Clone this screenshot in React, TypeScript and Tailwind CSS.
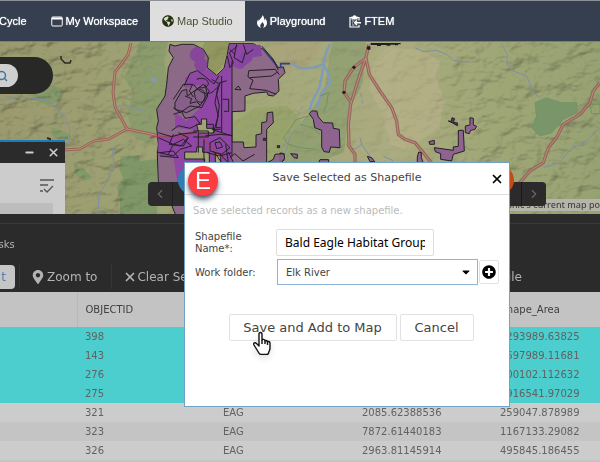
import { useState } from "react";
import type { ReactNode } from "react";
import { ChevronLeft, ChevronRight, Minus, Search, X } from "lucide-react";
import { FaCaretDown, FaGlobeAmericas, FaMapMarkerAlt, FaPlusCircle } from "react-icons/fa";

const columns = ["", "OBJECTID", "SPECIES", "Shape_Leng", "Shape_Area"];

const records = [
    { id: "398", species: "EAG", length: "4120.88214307", area: "1293989.63825", selected: true },
    { id: "143", species: "EAG", length: "3207.11950426", area: "1697989.11681", selected: true },
    { id: "276", species: "EAG", length: "1894.50278116", area: "200102.112632", selected: true },
    { id: "275", species: "EAG", length: "6633.40915527", area: "2916541.97029", selected: true },
    { id: "321", species: "EAG", length: "2085.62388536", area: "259047.878989", selected: false },
    { id: "323", species: "EAG", length: "7872.61440183", area: "1167133.29082", selected: false },
    { id: "326", species: "EAG", length: "2963.81145914", area: "495845.186455", selected: false },
];

// road casing and centre line share the same geometry
const westRoads = "M131 42l-3 12-13 17-2 20 2 15 12 22-9 5-9 5-15 2-14 8-17 1M127 128l14 3 10 2 8 2";
const eastRoads =
    "M266 10L258 50 240 100 212 190 205 250 207 315 225 340V366M258 52L222 78 195 120 192 155 212 182M258 52L268 100 300 150 335 200 350 240 355 280 375 295 405 305 430 335 455 366M960 125L940 150 930 185 900 220 850 250 830 290 805 320 790 365 750 390 715 430";

function WindowIcon() {
    return (
        <svg viewBox="0 0 24 22" className="h-[11px] w-3" fill="none" stroke="currentColor" strokeWidth="2">
            <rect x="1.5" y="2" width="21" height="18" rx="2" />
            <path d="M2 5h20" strokeWidth="4" />
        </svg>
    );
}

function FlameIcon() {
    return (
        <svg viewBox="0 0 20 26" className="h-[13px] w-[10px]" fill="currentColor">
            <path d="M10.5 0c1 5-6 8-7 13C3 12 2.600 10 3 8.500 1 10.500 0 13.500 0 16c0 5 3.500 9 9 10-3-2-3.500-5-1.500-7.500 1-1.500 2.500-2.500 2.500-4.500 3 2 4.500 4.500 4 7-.2 2-1 3.500-2 4.600 5-1 8-5 8-9.600 0-4-2-7-4-9.500 0 2-.5 3.500-1.800 4.500C15 7 14 3 10.500 0z" />
        </svg>
    );
}

function ClipboardIcon() {
    return (
        <svg viewBox="0 0 24 26" className="h-[13px] w-3" fill="none" stroke="currentColor" strokeWidth="2.400">
            <path d="M20 11V5H2v19h18v-4" />
            <path d="M6 4h2.500a2.500 2.500 0 0 1 5 0H16v4H6z" fill="currentColor" />
            <path d="M24 15.500H12m4-4.500-4.500 4.500L16 20" strokeWidth="3" />
            <path d="M6 12h5M6 16h2M6 20h5" strokeWidth="1.500" />
        </svg>
    );
}

function NavItem({ icon, active, children }: { icon?: ReactNode; active?: boolean; children: ReactNode }) {
    const tone = active ? "bg-[#dedede] text-[#4a5233]" : "text-white [text-shadow:0_0_1px_#ffffff]";
    return (
        <a href="#" className={`flex h-full shrink-0 items-center gap-[3px] px-3 ${tone}`}>
            {icon}
            <span>{children}</span>
        </a>
    );
}

function MapCanvas() {
    return (
        <svg viewBox="0 41 600 173" preserveAspectRatio="xMinYMin slice" className="h-full w-full">
            <defs>
                <filter id="relief" x="0" y="0" width="100%" height="100%">
                    <feTurbulence type="fractalNoise" baseFrequency="0.05 0.08" numOctaves="3" seed="4" />
                    <feColorMatrix values="0 0 0 0 0  0 0 0 0 0  0 0 0 0 0  1 0 0 0 0" />
                    <feDiffuseLighting surfaceScale="6" diffuseConstant="1.150" lightingColor="#ffffff">
                        <feDistantLight azimuth="225" elevation="60" />
                    </feDiffuseLighting>
                </filter>
                <linearGradient id="land">
                    <stop offset="0" stopColor="#9a9a6e" />
                    <stop offset="0.35" stopColor="#a0a676" />
                    <stop offset="0.65" stopColor="#abac80" />
                    <stop offset="0.78" stopColor="#a2a878" />
                    <stop offset="1" stopColor="#97a272" />
                </linearGradient>
                <linearGradient id="flat">
                    <stop offset="0" stopColor="#ffffff" />
                    <stop offset="0.2" stopColor="#eeeeee" />
                    <stop offset="0.26" stopColor="#555555" />
                    <stop offset="0.7" stopColor="#444444" />
                    <stop offset="0.8" stopColor="#dddddd" />
                </linearGradient>
                <mask id="hills">
                    <rect y="41" width="600" height="173" fill="url(#flat)" />
                </mask>
            </defs>
            <rect y="41" width="600" height="173" fill="url(#land)" />

            {/* forests and open ground */}
            <g fill="#809868">
                <path d="M140 41h28l-4 20 6 30-12 28-5 24-18-5-8-25 6-22-9-14 8-17z" opacity=".6" />
                <path d="M121 155l18-1 1 6 17-2v56h-37v-16l-3-12 6-9-4-10z" />
                <path d="M34 90l14-7 14 4-1 12-14 5-12-5zM74 163l10 5 8 9-8 3-9-7zM51 126l12 4 9 5-8 5-11-4z" opacity=".8" />
                <path d="M332 41h34l-3 40-14 28-5 42-34 14-28 2 10-30 18-26 14-20z" opacity=".5" />
            </g>
            <path d="M372 62l15-15 34 2 20 12-6 14 10 24-6 28-32 22-16-5-10-35-12-20z" fill="#b5b088" opacity=".75" />
            <path d="M233 122l22-15 32-2 14 14-14 34-18 8-10-15-26-2z" fill="#99a46c" />
            <path d="M205 41h25l-6 22-8 10-12-6-5-15z" fill="#92985f" />
            <path d="M272 41h50l-9 20-32 14-14-12z" fill="#aaa47b" />
            <g mask="url(#hills)" className="mix-blend-multiply">
                <rect y="41" width="600" height="173" filter="url(#relief)" opacity=".55" />
            </g>

            {/* rivers */}
            <g fill="none" stroke="#7d8fa6" strokeWidth="1">
                <path d="M0 99l22-3 20 2 12 5 12 15 4 10-2 14M112 147l2 16-7 18-8 13-1 18 3 8M114 106l12-2 18 6" />
                <path d="M357 51l5 22-3 11 4 20M303 105l-14 25-7 22" strokeWidth=".8" strokeDasharray="4 3" />
            </g>
            <path d="M151 76l6 2-2 4-4-2z" fill="#7f9bbb" />

            {/* highways */}
            <path d={westRoads} fill="none" stroke="#9a6558" strokeWidth="3" strokeLinejoin="round" />
            <path d={westRoads} fill="none" stroke="#bd8c79" strokeWidth="1" strokeLinejoin="round" />

            <g transform="translate(280 40) scale(.3333)">
                <g fill="none" stroke="#7f9bbb">
                    <path d="M35 68L60 82 100 80 130 70 145 95 150 125 125 155 110 200M130 68L138 35 150 10M130 80L118 140 95 185 88 210" strokeWidth="7" />
                    <path d="M100 210L60 250 30 290 15 340M405 20L430 32 470 28 500 40 520 58 570 64M665 10L682 40 680 70 700 90 740 105 760 155 780 170M960 260L920 300 870 325 840 365 790 380M200 312L225 325 245 310 270 345M245 310L240 290M310 345L340 360" stroke="#7d8fa6" strokeWidth="3" />
                </g>
                <path d="M765 185L800 170 840 185 890 185 890 215 850 235 815 275 780 285 755 260 770 225z" fill="#79966a" stroke="#6b9060" strokeWidth="2" />
                <path d="M120 165L145 155 140 190 130 215M85 225L50 235 10 290 25 310 60 320 110 325M60 250L95 260 120 280M930 190h30v28h-25z" fill="none" stroke="#6d9460" strokeWidth="3" />
                <path d={eastRoads} fill="none" stroke="#96665a" strokeWidth="10" strokeLinejoin="round" />
                <path d={eastRoads} fill="none" stroke="#bb9080" strokeWidth="3" strokeLinejoin="round" />
                <g fill="#20201c">
                    <circle cx="266" cy="21" r="6" />
                    <circle cx="222" cy="79" r="5" />
                    <circle cx="192" cy="154" r="5" />
                    <path d="M272 6h90v4h-8v3h-9v-2h-14v3h-11v-2h-17v3h-12v-3h-19z" />
                </g>
                <g fill="#8e6390" stroke="#242027" strokeWidth="3" strokeLinejoin="round">
                    <path d="M88 218L95 210 110 210 115 228 130 245 158 246 160 262 178 265 180 320 152 318 148 334 132 332 125 318 125 268 104 260 100 235z" />
                    <path d="M463 320L520 328 520 318 535 316 535 268 550 268 553 330 520 340 515 360 482 355 482 338 466 332z" />
                    <path d="M556 255L570 252 570 230 580 232 580 252 590 256 585 265 572 268 568 278 556 275zM447 302L463 298 463 310 449 310zM412 366L412 348 416 333 424 335 424 350 430 366zM262 346L275 350 284 362 270 362zM116 366L120 356 146 356 146 366zM32 338L52 340 52 352 42 350zM0 336L12 338 12 358 0 362z" />
                    <path d="M505 240L514 241 516 230 524 233 520 244 533 246 532 254 522 248z" fill="#57405c" />
                </g>
            </g>

            {/* habitat layer */}
            <g transform="translate(150 40) scale(.3333)" stroke="#242027" strokeWidth="3" strokeLinejoin="round">
                <path d="M60 10L75 15 95 10 130 10 160 25 175 50 172 80 200 103 222 82 232 40 238 8 310 8 340 25 375 65 382 80 400 78 405 95 385 115 387 150 370 165 355 163 350 153 310 157 285 165 285 210 246 212 246 303 280 303 282 320 318 318 318 282 335 278 335 245 350 242 352 215 368 213 370 245 350 265 350 366 370 355 375 340 402 338 404 352 385 378 105 378 105 530 80 530 60 480 25 425 22 340 25 310 22 280 20 260 25 240 20 205 45 165 50 130 55 80 70 50 57 30z" fill="#8a628a" fillOpacity=".88" />
                <path d="M105 110L130 95 175 85 200 105 225 80 240 10 290 10 315 30 305 60 270 85 245 75 245 366 105 366 105 470 85 440 70 350 25 345 25 290 140 268 75 260 75 215 110 240 150 200 178 150 165 130 105 140z" fill="#8f43a6" fillOpacity=".92" stroke="none" />
                <path d="M290 10L332 12 336 45 310 48 275 85 262 60z" fill="#8545a0" stroke="none" />
                <circle cx="142" cy="41" r="22" fill="#86479a" stroke="#7b3f90" strokeWidth="1" />
                <circle cx="153" cy="72" r="19" fill="#86479a" stroke="#7b3f90" strokeWidth="1" />
                <path d="M75 185L95 150 110 145 112 165 160 130 178 150 150 195 110 215 75 205z" fill="#87608a" />
                <path d="M104 333h36v-15h18v16h20v32h-14v-12h-60zM140 250h14v-16h16v28h22v14h-46zM196 338h16v28h-16z" fill="#a2a474" />
                <path d="M246 60L246 345M185 265L246 285" fill="none" />
                <path d="M340 25L385 80M392 82v-14h28" fill="none" stroke="#34408a" strokeWidth="5" />
                <path d="M0 290L25 285 90 290 140 272 165 300 190 325 225 355" fill="none" stroke="#a24468" strokeWidth="5" />
                <g fill="none" transform="translate(-60 -15)">
                    <path d="M162 150l18-38 22-8 20 15 30 25 15-25M200 130c35-15 55 30 5 25M190 145c35 45 60 25 70 10M170 155M195 180c-10-25 30-30 30 0s-30 20-30 0M165 180l20 8-5 14 20-5 10 10M130 190l30-45h28l-10 20 12 18M225 145l8 35-18 35-35-5-30 20-20-15M265 145l-10 55 10 40-15 50M275 120v170M270 140l-10 35 8 35-10 65h14M278 190h18v36h-14M245 130l20 12 25-8M292 60l8 35 10-15-12-30 24-20M320 25l-8 40 25 15 10-35M340 25l10 30 20-15M300 40l15 15M356 105l-2 18 15 10-10 25 50 5 30 12M356 104l80-4 12 16M360 125l65-5 18-12M395 30l35 40 15 32M325 150l-10 10 18 2z" />
                    <path d="M130 235l25-8 10 20 30-5 15 20-30 15-35-8-20 15M85 290l40 12 30-8 45-5M85 305l45 20 30-15 25 20-35 10-20 20-50-12M145 290l30 15-15 25-30-5-15 30M90 350l40-5 15 20-55-5M130 295l-12 30 35 5 20-25M225 300l45-5 35 3M240 320l30-15 30 30-25 20-35-10zM255 320l15-2 8 15-18 5zM230 350l40 10 35-10M265 350l30 30-8-55M250 345l25 35M230 265h20v15h22M205 290v60M222 310v65M190 285h45v18h-45" />
                    <path d="M302 365l12-12 25 22 35-20M310 378l-15-30" />
                </g>
                <path d="M340 292h7v6h-7zM382 314h7v6h-7z" fill="#57405c" />
            </g>

            <path d="M61 55v3l4 4h5l1-3" stroke="#2b2b25" strokeWidth="1.500" fill="none" />
            <path d="M47 137l3 1v3h6" stroke="#2b2b25" strokeWidth="2" fill="none" />
        </svg>
    );
}

function MapView() {
    return (
        <main className="relative h-[173px] overflow-hidden border-t border-[#7b7b80]">
            <MapCanvas />
            <div className="absolute left-0 top-[15px] flex h-[37px] w-[53px] items-center rounded-r-full bg-[#282826]">
                <button aria-label="Search" className="flex h-[23px] w-[18px] items-center rounded-r-full bg-[#cfcfcf] text-[#3b76a6]">
                    <Search size={12} strokeWidth={3} className="-ml-1" />
                </button>
            </div>

            <div className="absolute bottom-0 left-0 h-[74px] w-[65px] border-t-2 border-[#1d7ab8] bg-[#cccccc]">
                <div className="flex h-[21px] items-center justify-end gap-3 bg-[#2b2b2b] pr-[5px] text-[#cfcfcf]">
                    <button aria-label="Minimize"><Minus size={11} strokeWidth={4} /></button>
                    <button aria-label="Close panel"><X size={13} strokeWidth={3} /></button>
                </div>
                <button aria-label="Selection list" className="ml-[39px] mt-4 block text-[#555555]">
                    <svg viewBox="0 0 16 14" className="h-[14px] w-4" fill="none" stroke="currentColor" strokeWidth="1.300">
                        <path d="M1 1h14M1 6h8M1 12h3M5 10l3 3 6-6" />
                    </svg>
                </button>
                <div className="mt-[10px] h-[11px] w-[53px] bg-[#bdbdbd]"></div>
            </div>

            <div className="absolute bottom-[3px] right-0 bg-[#b5b5aa] font-['Noto_Sans',sans-serif] text-[9px] font-medium leading-3 text-[#454545]">
                National Geographic's current map po
            </div>
            <div className="absolute left-[148px] top-[140px] flex h-6 w-[398px] justify-between rounded-sm bg-[#2c2a2b] text-[#686868]">
                <button aria-label="Previous" className="flex w-[25px] items-center justify-center border-r border-[#202020]">
                    <ChevronLeft size={14} />
                </button>
                <button aria-label="Next" className="flex w-[25px] items-center justify-center border-l border-[#181818]">
                    <ChevronRight size={14} />
                </button>
            </div>
            <div className="absolute left-[178px] top-[123px] size-[30px] rounded-full bg-[#2f7fb5]"></div>
            <div className="absolute left-[484px] top-[123px] size-[30px] rounded-full bg-[#c64b17]"></div>
        </main>
    );
}

function Toolbar() {
    return (
        <section className="h-[78px] overflow-hidden bg-[#2b2b2b] pt-[9px] text-[#b4b4b4]">
            <div className="border-t border-[#383838] pt-[14px] text-[10px] leading-[14px]">
                <span className="-ml-3">Tasks</span>
            </div>
            <div className="mt-3 flex h-[25px] items-center whitespace-nowrap text-[12px]">
                <button className="flex h-6 w-[15px] shrink-0 justify-end rounded-r-sm bg-[#c6c6c6] pr-[9px] leading-6 text-[#5c7fae]">
                    <span>t</span>
                </button>
                <button className="ml-1 flex h-full shrink-0 items-center gap-[2px] border-l border-[#363636] pl-[11px] pr-[14px]">
                    <FaMapMarkerAlt size={14} />
                    Zoom to
                </button>
                <button className="flex h-full shrink-0 items-center border-l border-[#363636] pl-[11px]">
                    <X size={14} strokeWidth={3} />
                    Clear Selection
                </button>
                <button className="ml-auto mr-[78px] shrink-0">Shapefile</button>
            </div>
        </section>
    );
}

function RecordTable() {
    return (
        <table className="w-full table-fixed border-collapse text-left text-[10px] text-[#626262]">
            <colgroup>
                <col className="w-[77px]" />
                <col className="w-[138px]" />
                <col className="w-[139px]" />
                <col className="w-[138px]" />
                <col />
            </colgroup>
            <thead>
                <tr className="h-[35px] bg-[#c3c3c3] text-[#404040]">
                    {columns.map((name) => (
                        <th key={name} className="border-r border-[#b8b8b8] px-2 py-0 font-normal last:border-r-0">
                            {name}
                        </th>
                    ))}
                </tr>
            </thead>
            <tbody>
                {records.map((record) => (
                    <tr
                        key={record.id}
                        className={`h-[19px] ${record.selected ? "bg-[#4ccdce]" : "bg-[#cccccc] even:bg-[#c4c4c4]"}`}
                    >
                        <td className="p-0"></td>
                        <td className="px-2 py-0">{record.id}</td>
                        <td className="px-2 py-0">{record.species}</td>
                        <td className="px-2 py-0">{record.length}</td>
                        <td className="px-2 py-0">{record.area}</td>
                    </tr>
                ))}
            </tbody>
        </table>
    );
}

function HandCursor() {
    return (
        <svg viewBox="0 0 20 24" className="absolute left-[67px] top-[168px] h-6 w-5 drop-shadow-md" fill="#ffffff" stroke="#111111" strokeWidth="1.400" strokeLinejoin="round">
            <path d="M7 13V3c0-2 3-2 3 0v6c0-1 3-1 3 1 0-1 2.500-1 2.500 1 0-1 2.500-1 2.500 1v5c0 2-1 3-1.500 5 0 1-1 1.500-2 1.500H9c-1 0-2-1-3-3L2 14c-1-2 1-3 2.500-1.500L7 15z" />
            <path d="M10 9v4M13 10v3M15.500 11v3" fill="none" />
        </svg>
    );
}

function SaveDialog() {
    const [name, setName] = useState("Bald Eagle Habitat Group");
    const field = "border bg-white px-2";
    const action = "h-[27px] rounded-xs border border-[#e2e2e2] bg-white text-[13px] leading-none text-[#444444]";

    return (
        <div role="dialog" aria-labelledby="dialog-title" className="absolute left-[184px] top-[162px] w-[326px] border border-[#6fa3c9] bg-white pb-[65px] text-[10px] text-[#444444]">
            <div className="relative flex h-8 items-center justify-center border-b border-[#dddddd]">
                <h1 id="dialog-title" className="text-[11px]">Save Selected as Shapefile</h1>
                <button aria-label="Close" className="absolute right-[5px] text-black">
                    <X size={14} strokeWidth={3} />
                </button>
            </div>
            <p className="px-2 pt-2 leading-4 text-[#bbbbbb]">Save selected records as a new shapefile.</p>
            <div className="mt-[10px] flex items-center pl-[10px]">
                <label htmlFor="shapefile-name" className="w-[81px] leading-3">
                    Shapefile<br />Name*:
                </label>
                <input
                    id="shapefile-name"
                    value={name}
                    onChange={(e) => setName(e.target.value)}
                    className={`${field} h-[27px] w-[158px] rounded-xs border-[#dddddd] font-['Noto_Sans',sans-serif] text-[12px] text-black`}
                />
            </div>
            <div className="mt-[3px] flex items-center pl-[10px]">
                <label htmlFor="work-folder" className="w-[82px]">Work folder:</label>
                <div className="relative">
                    <select id="work-folder" className={`${field} h-[26px] w-[201px] appearance-none border-[#8fb6d6]`}>
                        <option>Elk River</option>
                    </select>
                    <FaCaretDown size={12} className="pointer-events-none absolute right-[6px] top-[7px] text-black" />
                </div>
                <button aria-label="Add folder" className="ml-px flex h-6 w-5 items-center justify-center rounded-xs border border-[#e2e2e2] text-black">
                    <FaPlusCircle size={14} />
                </button>
            </div>
            <div className="mt-[29px] flex justify-center gap-[3px] pl-2">
                <button className={`${action} w-[168px]`}>Save and Add to Map</button>
                <button className={`${action} w-[74px]`}>Cancel</button>
            </div>
            <div className="absolute left-[3px] top-[3px] flex size-[30px] items-center justify-center rounded-full bg-[#fb3c40] font-['Liberation_Sans'] text-[24px] leading-none text-white shadow-md shadow-gray-600">
                E
            </div>
            <HandCursor />
        </div>
    );
}

export default function App() {
    return (
        <div className="relative h-screen overflow-hidden bg-[#c4c4c4] font-['DejaVu_Sans',sans-serif]">
            <nav className="flex h-[41px] items-center border-t border-[#8d9298] bg-[#353f50] font-['Liberation_Sans',sans-serif] text-[11px] whitespace-nowrap">
                <span className="-ml-[13px] flex h-full">
                    <NavItem>Cycle</NavItem>
                </span>
                <NavItem icon={<WindowIcon />}>My Workspace</NavItem>
                <NavItem active icon={<FaGlobeAmericas size={12} className="text-[#26330f]" />}>Map Studio</NavItem>
                <NavItem icon={<FlameIcon />}>Playground</NavItem>
                <NavItem icon={<ClipboardIcon />}>FTEM</NavItem>
            </nav>
            <MapView />
            <Toolbar />
            <RecordTable />
            <SaveDialog />
        </div>
    );
}
